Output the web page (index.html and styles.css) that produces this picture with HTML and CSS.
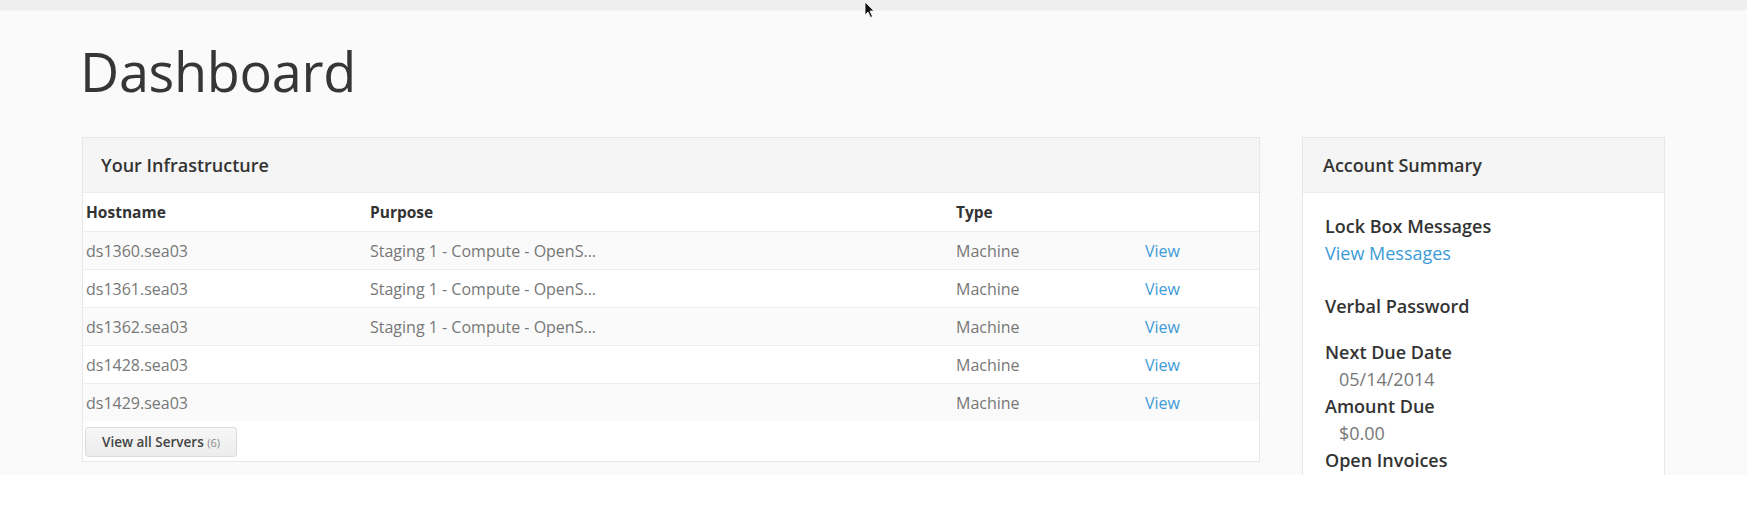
FILE: index.html
```html
<!DOCTYPE html>
<html>
<head>
<meta charset="utf-8">
<title>Dashboard</title>
<link rel="stylesheet" href="styles.css">
</head>
<body>
<div class="page">
  <div class="topbar"></div>
  <div class="container">
    <h1 class="title">Dashboard</h1>
    <div class="columns">
      <section class="panel main">
        <div class="panel-head">Your Infrastructure</div>
        <table class="servers">
          <colgroup>
            <col class="c-host"><col class="c-purpose"><col class="c-type"><col class="c-link">
          </colgroup>
          <thead>
            <tr><th>Hostname</th><th>Purpose</th><th>Type</th><th></th></tr>
          </thead>
          <tbody>
            <tr><td>ds1360.sea03</td><td>Staging 1 - Compute - OpenS...</td><td>Machine</td><td><a href="#">View</a></td></tr>
            <tr><td>ds1361.sea03</td><td>Staging 1 - Compute - OpenS...</td><td>Machine</td><td><a href="#">View</a></td></tr>
            <tr><td>ds1362.sea03</td><td>Staging 1 - Compute - OpenS...</td><td>Machine</td><td><a href="#">View</a></td></tr>
            <tr><td>ds1428.sea03</td><td></td><td>Machine</td><td><a href="#">View</a></td></tr>
            <tr><td>ds1429.sea03</td><td></td><td>Machine</td><td><a href="#">View</a></td></tr>
          </tbody>
        </table>
        <button class="btn">View all Servers <span class="count">(6)</span></button>
      </section>
      <section class="panel side">
        <div class="panel-head">Account Summary</div>
        <div class="summary">
          <div class="item gap-lg">
            <div class="label">Lock Box Messages</div>
            <a class="link" href="#">View Messages</a>
          </div>
          <div class="item gap-md">
            <div class="label">Verbal Password</div>
          </div>
          <div class="item">
            <div class="label">Next Due Date</div>
            <div class="value">05/14/2014</div>
          </div>
          <div class="item">
            <div class="label">Amount Due</div>
            <div class="value">$0.00</div>
          </div>
          <div class="item">
            <div class="label">Open Invoices</div>
          </div>
        </div>
      </section>
    </div>
  </div>
  <svg class="cursor" width="12" height="18" viewBox="0 0 12 18"><path d="M1 1 L1 14 L4 11 L6.5 16.5 L8.5 15.5 L6 10 L10 10 Z" fill="#111" stroke="#fff" stroke-width="0.8"/></svg>
</div>
</body>
</html>
```
FILE: styles.css
```css
html, body {
  margin: 0;
  padding: 0;
  background: #ffffff;
}
body {
  font-family: "Open Sans", "Liberation Sans", sans-serif;
  color: #666;
}
.page {
  position: relative;
  height: 475px;
  overflow: hidden;
  background: #fafafa;
}
.topbar {
  height: 10px;
  background: #efefef;
  border-bottom: 1px solid #f5f5f5;
}
.container {
  padding: 33px 0 0 82px;
}
.title {
  margin: 0 0 0 -2px;
  font-size: 54px;
  line-height: 54px;
  font-weight: 400;
  color: #363638;
  letter-spacing: -0.3px;
}
.columns {
  display: flex;
  gap: 42px;
  margin-top: 39px;
  align-items: flex-start;
}
.panel {
  background: #fff;
  border: 1px solid #e7e7e7;
  box-sizing: border-box;
}
.main {
  width: 1178px;
  padding-bottom: 4px;
}
.side {
  width: 363px;
  height: 360px;
}
.panel-head {
  height: 55px;
  box-sizing: border-box;
  border-bottom: 1px solid #ebebeb;
  background: #f5f5f5;
  padding-left: 18px;
  display: flex;
  align-items: center;
  font-size: 18px;
  font-weight: 600;
  color: #333;
}
.side .panel-head {
  padding-left: 20px;
}
.servers {
  width: 100%;
  border-collapse: collapse;
  table-layout: fixed;
  font-size: 16px;
}
.c-host { width: 287px; }
.c-purpose { width: 586px; }
.c-type { width: 189px; }
.servers th {
  height: 38px;
  text-align: left;
  font-weight: 700;
  color: #333;
  padding: 0 0 0 3px;
  font-size: 15.5px;
}
.servers td {
  height: 37px;
  padding: 0 0 0 3px;
  border-top: 1px solid #eeeeee;
  color: #777;
  white-space: nowrap;
  overflow: hidden;
}
.servers th:nth-child(2), .servers td:nth-child(2),
.servers th:nth-child(3), .servers td:nth-child(3),
.servers th:nth-child(4), .servers td:nth-child(4) {
  padding-left: 0;
}
.servers tbody tr:nth-child(odd) td {
  background: #fafafa;
}
.servers a {
  color: #3d9bd8;
  text-decoration: none;
}
.btn {
  display: block;
  margin: 6px 0 0 2px;
  height: 30px;
  width: 152px;
  padding: 0;
  border: 1px solid #dcdcdc;
  border-radius: 3px;
  background: linear-gradient(#f7f7f7, #ececec);
  font-family: "Open Sans", "Liberation Sans", sans-serif;
  font-size: 13.5px;
  font-weight: 600;
  color: #444;
  cursor: pointer;
}
.btn .count {
  font-weight: 400;
  font-size: 11px;
  color: #888;
}
.summary {
  padding: 20px 0 0 22px;
  font-size: 18px;
  line-height: 27px;
}
.item.gap-lg { margin-bottom: 26px; }
.item.gap-md { margin-bottom: 19px; }
.label {
  font-weight: 600;
  color: #333;
}
.link {
  color: #3d9bd8;
  text-decoration: none;
}
.value {
  padding-left: 14px;
  color: #777;
}
.cursor {
  position: absolute;
  left: 864px;
  top: 1px;
}
```
